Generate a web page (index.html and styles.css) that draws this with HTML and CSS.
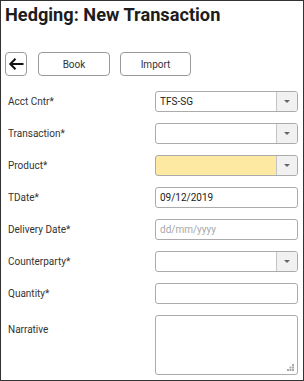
FILE: index.html
```html
<!DOCTYPE html>
<html>
<head>
<meta charset="utf-8">
<link rel="stylesheet" href="styles.css">
</head>
<body>
<div class="page">
  <h1 class="title">Hedging: New Transaction</h1>
  <div class="toolbar">
    <button class="btn btn-back" aria-label="Back">
      <svg width="16" height="14" viewBox="0 0 16 14"><path d="M15.5 7H2.5M7.5 1.8L2.3 7 7.5 12.2" fill="none" stroke="#111" stroke-width="2"/></svg>
    </button>
    <button class="btn btn-text">Book</button>
    <button class="btn btn-text btn-import">Import</button>
  </div>
  <div class="form">
    <div class="label">Acct Cntr*</div>
    <div class="select"><span class="select-value">TFS-SG</span><span class="select-btn"><i class="caret"></i></span></div>

    <div class="label">Transaction*</div>
    <div class="select"><span class="select-value"></span><span class="select-btn"><i class="caret"></i></span></div>

    <div class="label">Product*</div>
    <div class="select select-required"><span class="select-value"></span><span class="select-btn"><i class="caret"></i></span></div>

    <div class="label">TDate*</div>
    <input class="field" type="text" value="09/12/2019">

    <div class="label">Delivery Date*</div>
    <input class="field" type="text" placeholder="dd/mm/yyyy">

    <div class="label">Counterparty*</div>
    <div class="select"><span class="select-value"></span><span class="select-btn"><i class="caret"></i></span></div>

    <div class="label">Quantity*</div>
    <input class="field" type="text">

    <div class="label label-area">Narrative</div>
    <div class="area-wrap">
      <textarea class="area"></textarea>
      <svg class="grip" width="7" height="7" viewBox="0 0 7 7"><g fill="#aaa"><rect x="5" y="0" width="2" height="2"/><rect x="2.5" y="2.5" width="2" height="2"/><rect x="5" y="2.5" width="2" height="2"/><rect x="0" y="5" width="2" height="2"/><rect x="2.5" y="5" width="2" height="2"/><rect x="5" y="5" width="2" height="2"/></g></svg>
    </div>
  </div>
</div>
</body>
</html>
```

FILE: styles.css
```css
* { box-sizing: border-box; }
html, body { margin: 0; padding: 0; background: #fff; }
body { font-family: Roboto, "Liberation Sans", Arial, sans-serif; color: #333; }

.page {
  width: 304px;
  height: 381px;
  border: 1px solid #333;
  padding: 3px 5px 0 4px;
  overflow: hidden;
}

.title {
  margin: 0;
  font-size: 18.2px;
  line-height: 22px;
  font-weight: 700;
  color: #1d1d1d;
}

.toolbar {
  display: flex;
  gap: 10px;
  margin-top: 26px;
  height: 24px;
}

.btn {
  height: 24px;
  border: 1px solid #9a9a9a;
  border-radius: 4px;
  background: #fff;
  font-family: inherit;
  font-size: 10px;
  color: #333;
  padding: 0;
  display: flex;
  align-items: center;
  justify-content: center;
}
.btn-back { width: 22px; margin-right: 1px; }
.btn-text { width: 72px; }
.btn-import { width: 71px; }

.form {
  margin-top: 15px;
  margin-left: 3px;
  display: grid;
  grid-template-columns: 147px 143px;
  row-gap: 11px;
  align-items: start;
}

.label {
  font-size: 10px;
  line-height: 21px;
  color: #333;
}
.label-area { padding-top: 4px; }

.select {
  height: 21px;
  border: 1px solid #ababab;
  border-radius: 3px;
  display: flex;
  background: #fff;
  overflow: hidden;
}
.select-required { background: #fde9a2; }
.select-value {
  flex: 1;
  font-size: 10px;
  line-height: 19px;
  padding-left: 4px;
  color: #222;
}
.select-btn {
  width: 21px;
  border-left: 1px solid #c4c4c4;
  background: #f1f1f1;
  display: flex;
  align-items: center;
  justify-content: center;
}
.caret {
  width: 0;
  height: 0;
  border-left: 3.5px solid transparent;
  border-right: 3.5px solid transparent;
  border-top: 3.5px solid #666;
}

.field {
  width: 143px;
  height: 21px;
  border: 1px solid #ababab;
  border-radius: 3px;
  font-family: inherit;
  font-size: 10px;
  color: #222;
  padding: 0 4px;
  margin: 0;
  outline: none;
}
.field::placeholder { color: #a8a8a8; }

.area-wrap {
  position: relative;
  height: 60px;
}
.area {
  display: block;
  width: 143px;
  height: 60px;
  border: 1px solid #ababab;
  border-radius: 3px;
  resize: none;
  margin: 0;
  padding: 4px;
  font-family: inherit;
  font-size: 10px;
  outline: none;
}
.grip {
  position: absolute;
  right: 4px;
  bottom: 4px;
}
```
